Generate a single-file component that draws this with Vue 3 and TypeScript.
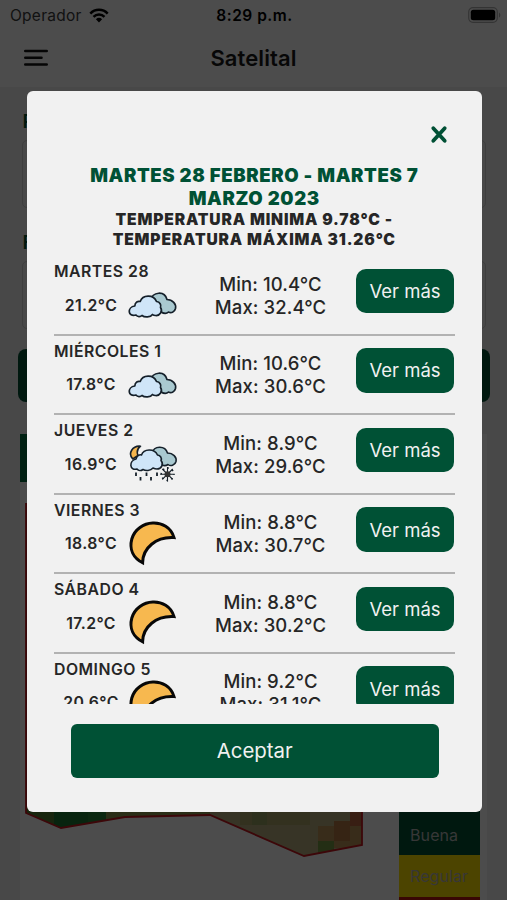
<script setup lang="ts">
type IconKind = 'clouds' | 'rain' | 'moon'

interface Day {
  name: string
  temp: string
  icon: IconKind
  min: string
  max: string
}

const days: Day[] = [
  { name: 'MARTES 28', temp: '21.2', icon: 'clouds', min: '10.4', max: '32.4' },
  { name: 'MIÉRCOLES 1', temp: '17.8', icon: 'clouds', min: '10.6', max: '30.6' },
  { name: 'JUEVES 2', temp: '16.9', icon: 'rain', min: '8.9', max: '29.6' },
  { name: 'VIERNES 3', temp: '18.8', icon: 'moon', min: '8.8', max: '30.7' },
  { name: 'SÁBADO 4', temp: '17.2', icon: 'moon', min: '8.8', max: '30.2' },
  { name: 'DOMINGO 5', temp: '20.6', icon: 'moon', min: '9.2', max: '31.1' },
]
</script>

<template>
  <div class="screen">
    <div class="page">
      <header class="top">
        <div class="status">
          <div class="carrier">
            <span>Operador</span>
            <svg width="20" height="15" viewBox="0 0 20 15">
              <path d="M1.3 5.6a12 12 0 0 1 17.4 0M4.5 8.8a7.7 7.7 0 0 1 11 0" fill="none" stroke="#000" stroke-width="2.5" />
              <path d="M10 14.4 6.9 11.2a4.5 4.5 0 0 1 6.2 0z" />
            </svg>
          </div>
          <span class="clock">8:29 p.m.</span>
          <svg class="battery" width="33" height="16" viewBox="0 0 33 16">
            <rect x="0.7" y="0.7" width="28.6" height="14.6" rx="4.2" fill="none" stroke="#b0b0b0" stroke-width="1.2" />
            <rect x="2.8" y="2.8" width="24.4" height="10.4" rx="2.5" />
            <path d="M31 5.4v5.2c1.8-.8 1.8-4.4 0-5.2z" fill="#b0b0b0" />
          </svg>
        </div>
        <div class="nav">
          <svg width="25" height="18" viewBox="0 0 25 18">
            <path d="M1.3 2h21.400M1.3 8.8h16.200M1.3 15.500h21.400" stroke="#111" stroke-width="2.600" stroke-linecap="round" />
          </svg>
          <h1>Satelital</h1>
        </div>
      </header>
      <div class="form">
        <label>P</label>
        <div class="field"></div>
        <label>F</label>
        <div class="field"></div>
        <div class="submit"></div>
      </div>
      <div class="mapcard">
        <div class="tab"></div>
        <div class="map">
          <svg width="350" height="366" viewBox="0 0 350 366">
            <defs>
              <clipPath id="parcel-shape">
                <path d="M6 0V310L41 325 105 314 190 312 284 353 342 342V0z" />
              </clipPath>
            </defs>
            <g clip-path="url(#parcel-shape)" shape-rendering="crispEdges">
              <rect width="350" height="366" fill="#b8b080" />
              <path d="M0 0h110v366H0z" fill="#507d2f" />
              <path d="M34 300h34v30H34z" fill="#1b7a34" />
              <path d="M68 300h18v24H68z" fill="#278238" />
              <path d="M86 300h104v20H86z" fill="#8c9c4d" />
              <path d="M220 300h70v22h-70z" fill="#aaa568" />
              <path d="M232 300h15v22h-15z" fill="#98a063" />
              <path d="M298 323h44v22h-44z" fill="#bc9459" />
              <path d="M314 318h16v20h-16z" fill="#b57b45" />
              <path d="M330 300h12v23h-12z" fill="#bd6640" />
              <path d="M298 338h16v12h-16z" fill="#779b45" />
            </g>
            <path d="M6 0V310L41 325 105 314 190 312 284 353 342 342V0" fill="none" stroke="#c81820" stroke-width="1.800" />
          </svg>
        </div>
        <div class="legend">
          <div class="good">Buena</div>
          <div class="regular">Regular</div>
          <div class="bad"></div>
        </div>
      </div>
    </div>

    <div class="overlay">
      <section class="modal">
        <button class="close" aria-label="Cerrar">
          <svg width="18" height="19" viewBox="0 0 18 19">
            <path d="M3.300 3.200 14.700 15.800M14.700 3.200 3.300 15.800" stroke="#005035" stroke-width="3.800" stroke-linecap="round" />
          </svg>
        </button>
        <h2>MARTES 28 FEBRERO - MARTES 7<br />MARZO 2023</h2>
        <h3>TEMPERATURA MINIMA 9.78°C -<br />TEMPERATURA MÁXIMA 31.26°C</h3>
        <div class="list">
          <div v-for="day in days" :key="day.name" class="row">
            <div class="summary">
              <div class="day">{{ day.name }}</div>
              <div class="now">
                <span class="temp">{{ day.temp }}°C</span>
                <svg v-if="day.icon === 'clouds'" width="50" height="48" viewBox="0 0 50 48" stroke="#15202a" stroke-width="1.7" stroke-linejoin="round">
                  <path d="M22 19.500C25 10.500 36.500 9.500 39 18.500C44.500 18.500 48.500 23 47.500 27.500C46.500 31.500 43 32.500 40.500 31C38.500 33 35 32.500 32 30z" fill="#a9c9d0" />
                  <path d="M6.800 25C7 21 10 19.800 12.200 20.500C14.500 13.500 25.500 13 28.500 20.500C32 21 33.500 24 32.500 26.500C35 30 32 35 27.500 34.500C26 34.500 25 34 24.500 33.500C22.500 36.500 16.500 36.500 14 34.500C12.500 36 9.500 36 8 34C-.500 36.500 -1 26 6.800 25z" fill="#cfe5f8" />
                </svg>
                <svg v-else-if="day.icon === 'rain'" width="50" height="48" viewBox="0 0 50 48" stroke="#15202a" stroke-width="1.6" stroke-linejoin="round">
                  <path d="M12.500 6.200C4.500 5.500-.500 13.500 4.800 19L10 15.500C8.500 12 9 9 12.500 6.200z" fill="#f5b54d" />
                  <path d="M24 13C26 5.500 37 5 39.500 13C45 13 49 17 48 21.500C47 25.500 42.500 26.500 40 24.500C38 26 35 26 32 24z" fill="#a9c9d0" />
                  <path d="M8 19C9 15 12 14.500 13.500 15C15.500 8.500 26.500 8 29.500 15C32.500 15.500 34 18 33 20.500C36 24 33.500 29 29 29C27.500 29 26 28.500 25 28C22.500 31 17.500 31 15 29.500C13 31 10.500 31 9 29C1.500 31 .500 21 8 19z" fill="#cfe5f8" />
                  <path d="M8 32.500v3.500M12.500 37v3.500M18.500 32.500v3.500M23 37v3.500M29 32.500v3.500" stroke-width="1.800" />
                  <path d="M39.500 27v14.500M32.200 34.200h14.600M34.300 29l10.400 10.400M44.700 29 34.300 39.400" stroke-width="1.100" />
                  <circle cx="39.500" cy="34.200" r="3" fill="#333" stroke="none" />
                  <circle cx="39.500" cy="34.200" r="6.300" fill="none" stroke-width="1.400" stroke-dasharray="1.600 3.350" stroke-dashoffset=".8" />
                </svg>
                <svg v-else width="50" height="48" viewBox="0 0 50 48" stroke="#080808" stroke-width="3">
                  <path d="M46 17.600C40-3 9.500-1 3.800 19C1 29.500 5.500 38 14.600 42.700C14.800 28 28 16.500 46 17.600z" fill="#f7b84f" />
                </svg>
              </div>
            </div>
            <div class="range">
              <div>Min: {{ day.min }}°C</div>
              <div>Max: {{ day.max }}°C</div>
            </div>
            <button class="more">Ver más</button>
          </div>
        </div>
        <button class="accept">Aceptar</button>
      </section>
    </div>
  </div>
</template>

<style>
body {
  margin: 0;
  overflow: hidden;
}
</style>

<style scoped>
.screen {
  position: relative;
  width: 507px;
  height: 900px;
  overflow: hidden;
  font-family: Inter, "Liberation Sans", sans-serif;
}
* {
  box-sizing: border-box;
}
svg {
  display: block;
  flex: none;
}
button {
  padding: 0;
  border: 0;
  font-family: inherit;
}
.page {
  height: 900px;
  background: #f0f0f0;
}
.top {
  height: 87px;
  background: #fff;
}
.status {
  display: grid;
  grid-template-columns: 1fr auto 1fr;
  align-items: center;
  height: 30px;
  padding: 0 6px 0 10px;
}
.carrier {
  display: flex;
  align-items: center;
  gap: 7px;
  color: #3c3c3c;
  font-size: 15.5px;
  letter-spacing: 0.25px;
}
.clock {
  margin-left: -2px;
  font-size: 15.5px;
  font-weight: 600;
  letter-spacing: 0.5px;
}
.battery {
  justify-self: end;
}
.nav {
  display: grid;
  grid-template-columns: 25px 1fr 25px;
  align-items: center;
  height: 56px;
  padding: 0 24px;
}
h1 {
  margin: 0;
  color: #1a1a1a;
  font-size: 22px;
  font-weight: 600;
  letter-spacing: 0.1px;
  text-align: center;
}
.form {
  display: flex;
  flex-direction: column;
  padding: 24px 21px 0 22px;
}
label {
  height: 29px;
  padding-left: 0.5px;
  color: #00502f;
  font-size: 19px;
  font-weight: 600;
  line-height: 21px;
}
.field {
  height: 68px;
  margin-bottom: 24px;
  border: 1px solid #cfcfcf;
  border-radius: 5px;
}
.submit {
  height: 53px;
  margin: -4px -4px 0;
  border-radius: 8px;
  background: #005135;
}
.mapcard {
  display: grid;
  grid-template-columns: 379px 81px 1fr;
  grid-template-rows: 48px 1fr;
  height: 466px;
  margin: 32px 20px 0;
  background: #fff;
}
.tab {
  grid-column: 1 / 4;
  width: 120px;
  background: #006b3c;
}
.map {
  padding-top: 21px;
}
.legend {
  padding-top: 289px;
  color: #b8b8b8;
  font-size: 16px;
  letter-spacing: 0.1px;
}
.legend div {
  height: 42px;
  padding-left: 11px;
  line-height: 42px;
}
.legend .good {
  height: 84px;
  padding-top: 43px;
  background: #005135;
}
.legend .regular {
  background: #ffe500;
}
.legend .bad {
  height: 3px;
  background: #c01a10;
}
.overlay {
  position: absolute;
  inset: 0;
  padding: 91px 25px 0 26.5px;
  background: rgba(0, 0, 0, 0.7);
}
.modal {
  display: flex;
  flex-direction: column;
  height: 720.5px;
  border-radius: 6px;
  background: #f1f1f1;
  color: #262626;
}
.close {
  display: flex;
  align-self: flex-end;
  margin: 34px 34px 0 0;
  background: none;
}
h2,
h3 {
  margin: 0;
  font-weight: 900;
  text-align: center;
  white-space: nowrap;
}
h2 {
  margin-top: 20px;
  color: #005135;
  font-size: 18.6px;
  line-height: 23px;
  letter-spacing: 0.6px;
}
h3 {
  font-size: 15.6px;
  line-height: 19.5px;
  letter-spacing: 0.85px;
}
.list {
  height: 448px;
  margin: 7px 27px 0 27.5px;
  overflow: hidden;
}
.row {
  display: grid;
  grid-template-columns: 141px 151px 98px;
  height: 79.6px;
  border-bottom: 2px solid #b2b2b2;
}
.summary {
  padding-top: 6px;
}
.day {
  height: 19px;
  font-size: 15.8px;
  font-weight: 600;
  line-height: 19px;
  letter-spacing: 0.5px;
}
.now {
  display: flex;
  align-items: center;
  height: 48px;
}
.temp {
  width: 74px;
  font-size: 15.8px;
  font-weight: 600;
  text-align: center;
  letter-spacing: 0.4px;
}
.range {
  padding-top: 16.5px;
  font-size: 18.5px;
  font-weight: 500;
  line-height: 23px;
  text-align: center;
  letter-spacing: 0.1px;
  white-space: nowrap;
}
.more {
  width: 98px;
  height: 44.5px;
  margin: 12.5px 0 0 10px;
  border-radius: 10px;
  background: #005135;
  color: #f1f1f1;
  font-size: 18.5px;
}
.accept {
  height: 53.5px;
  margin: 20px 43px 0 44px;
  border-radius: 6px;
  background: #005135;
  color: #f1f1f1;
  font-size: 20.4px;
}
</style>
